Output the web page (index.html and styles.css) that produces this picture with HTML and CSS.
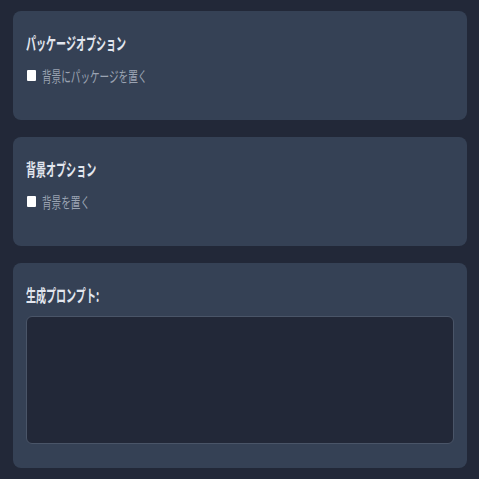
FILE: index.html
```html
<!DOCTYPE html>
<html lang="ja">
<head>
<meta charset="utf-8">
<link rel="stylesheet" href="styles.css">
</head>
<body>
  <section class="card">
    <h3 class="card-title"><span class="squeeze">パッケージオプション</span></h3>
    <label class="option"><input type="checkbox" class="box"><span class="squeeze label-text">背景にパッケージを置く</span></label>
  </section>
  <section class="card">
    <h3 class="card-title"><span class="squeeze">背景オプション</span></h3>
    <label class="option"><input type="checkbox" class="box"><span class="squeeze label-text">背景を置く</span></label>
  </section>
  <section class="card card-prompt">
    <h3 class="card-title prompt-title"><span class="squeeze">生成プロンプト:</span></h3>
    <textarea class="prompt"></textarea>
  </section>
</body>
</html>
```
FILE: styles.css
```css
html, body {
  margin: 0;
  background: #222838;
}
body {
  padding: 11px 12px 0 13px;
  font-family: "Noto Sans CJK JP", "Noto Sans", sans-serif;
}
.card {
  background: #354155;
  border-radius: 8px;
  padding: 20px 13px;
  margin-bottom: 17px;
  height: 69px;
}
.card-prompt {
  height: auto;
}
.card-title {
  margin: 0 0 10px;
  font-size: 17px;
  line-height: 24px;
  font-weight: 700;
  color: #e2e6ee;
  white-space: nowrap;
}
.prompt-title {
  margin-bottom: 9px;
}
.squeeze {
  display: inline-block;
  transform: scaleX(0.59);
  transform-origin: left center;
  white-space: nowrap;
}
.option {
  display: flex;
  align-items: center;
  height: 21px;
  white-space: nowrap;
}
.box {
  appearance: none;
  -webkit-appearance: none;
  width: 9px;
  height: 11px;
  margin: 0 6px 0 1px;
  background: #ffffff;
  border-radius: 1px;
  border: none;
}
.label-text {
  font-size: 15px;
  line-height: 21px;
  color: #9aa3b2;
  transform: scaleX(0.64);
}
.prompt {
  display: block;
  box-sizing: border-box;
  width: 100%;
  height: 128px;
  margin: 0 0 4px;
  background: #222838;
  border: 1px solid #4a5568;
  border-radius: 6px;
  resize: none;
}
```
